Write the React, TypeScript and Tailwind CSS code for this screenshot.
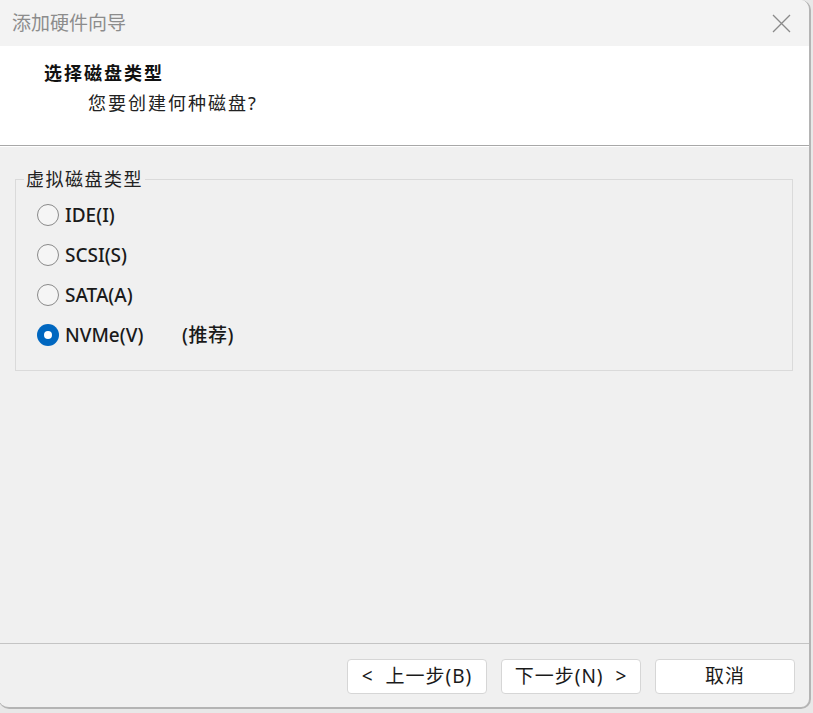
import React from "react";

const font = { fontFamily: '"Noto Sans", "Noto Sans CJK SC", sans-serif' };

function Radio({ label, checked, extra }: { label: string; checked?: boolean; extra?: string }) {
  return (
    <div className="flex items-center h-[40px]">
      {checked ? (
        <div className="w-[22px] h-[22px] rounded-full bg-[#0067c0] flex items-center justify-center">
          <div className="w-[8px] h-[8px] rounded-full bg-white" />
        </div>
      ) : (
        <div className="w-[22px] h-[22px] rounded-full border-[1.5px] border-[#8a8a8a] bg-[#f5f5f5]" />
      )}
      <span className="ml-[6px] text-[19px] font-medium text-[#1a1a1a] w-[117px]">{label}</span>
      {extra && <span className="text-[19px] font-medium text-[#1a1a1a] tracking-[0.5px]">{extra}</span>}
    </div>
  );
}

function Btn({ children }: { children: React.ReactNode }) {
  return (
    <div className="w-[140px] h-[35px] bg-white border border-[#d6d6d6] rounded-[4px] flex items-center justify-center text-[19px] tracking-[1px] text-[#1a1a1a]">
      {children}
    </div>
  );
}

export default function App() {
  return (
    <div className="w-[813px] h-[713px] bg-[#e8e8e8] overflow-hidden" style={font}>
      <div className="w-[812px] h-[709px] -ml-px rounded-tr-[10px] rounded-b-[10px] border-r-2 border-b-2 border-[#b4b4b4] bg-[#f0f0f0] flex flex-col overflow-hidden">
        <div className="h-[46px] bg-[#f3f3f3] flex items-center justify-between pl-[13px] pr-[18px]">
          <span className="text-[19px] text-[#8c8c8c]">添加硬件向导</span>
          <svg width="19" height="19" viewBox="0 0 19 19">
            <path d="M1 1 L18 18 M18 1 L1 18" stroke="#8a8a8a" strokeWidth="1.3" fill="none" />
          </svg>
        </div>
        <div className="h-[100px] bg-white border-b border-[#a8a8a8] flex flex-col pl-[45px] pt-[13px]">
          <span className="text-[18px] font-bold text-[#111] tracking-[2px] leading-[28px]">选择磁盘类型</span>
          <span className="ml-[44px] text-[18px] text-[#222] tracking-[2px] leading-[30px] mt-[1px]">您要创建何种磁盘?</span>
        </div>
        <div className="flex-1 border-t border-white px-[16px] pt-[20px]">
          <fieldset className="border border-[#dadada] h-[204px]">
            <legend className="ml-[8px] px-[2px] text-[18px] text-[#222] tracking-[1.5px] leading-[24px]">虚拟磁盘类型</legend>
            <div className="flex flex-col pt-[4px] pl-[21px]">
              <Radio label="IDE(I)" />
              <Radio label="SCSI(S)" />
              <Radio label="SATA(A)" />
              <Radio label="NVMe(V)" checked extra="(推荐)" />
            </div>
          </fieldset>
        </div>
        <div className="border-t border-[#c4c4c4] pt-[15px] pb-[13px] pr-[14px] flex justify-end gap-[14px]">
          <Btn>&lt;&nbsp; 上一步(B)</Btn>
          <Btn>下一步(N)&nbsp; &gt;</Btn>
          <Btn>取消</Btn>
        </div>
      </div>
    </div>
  );
}
